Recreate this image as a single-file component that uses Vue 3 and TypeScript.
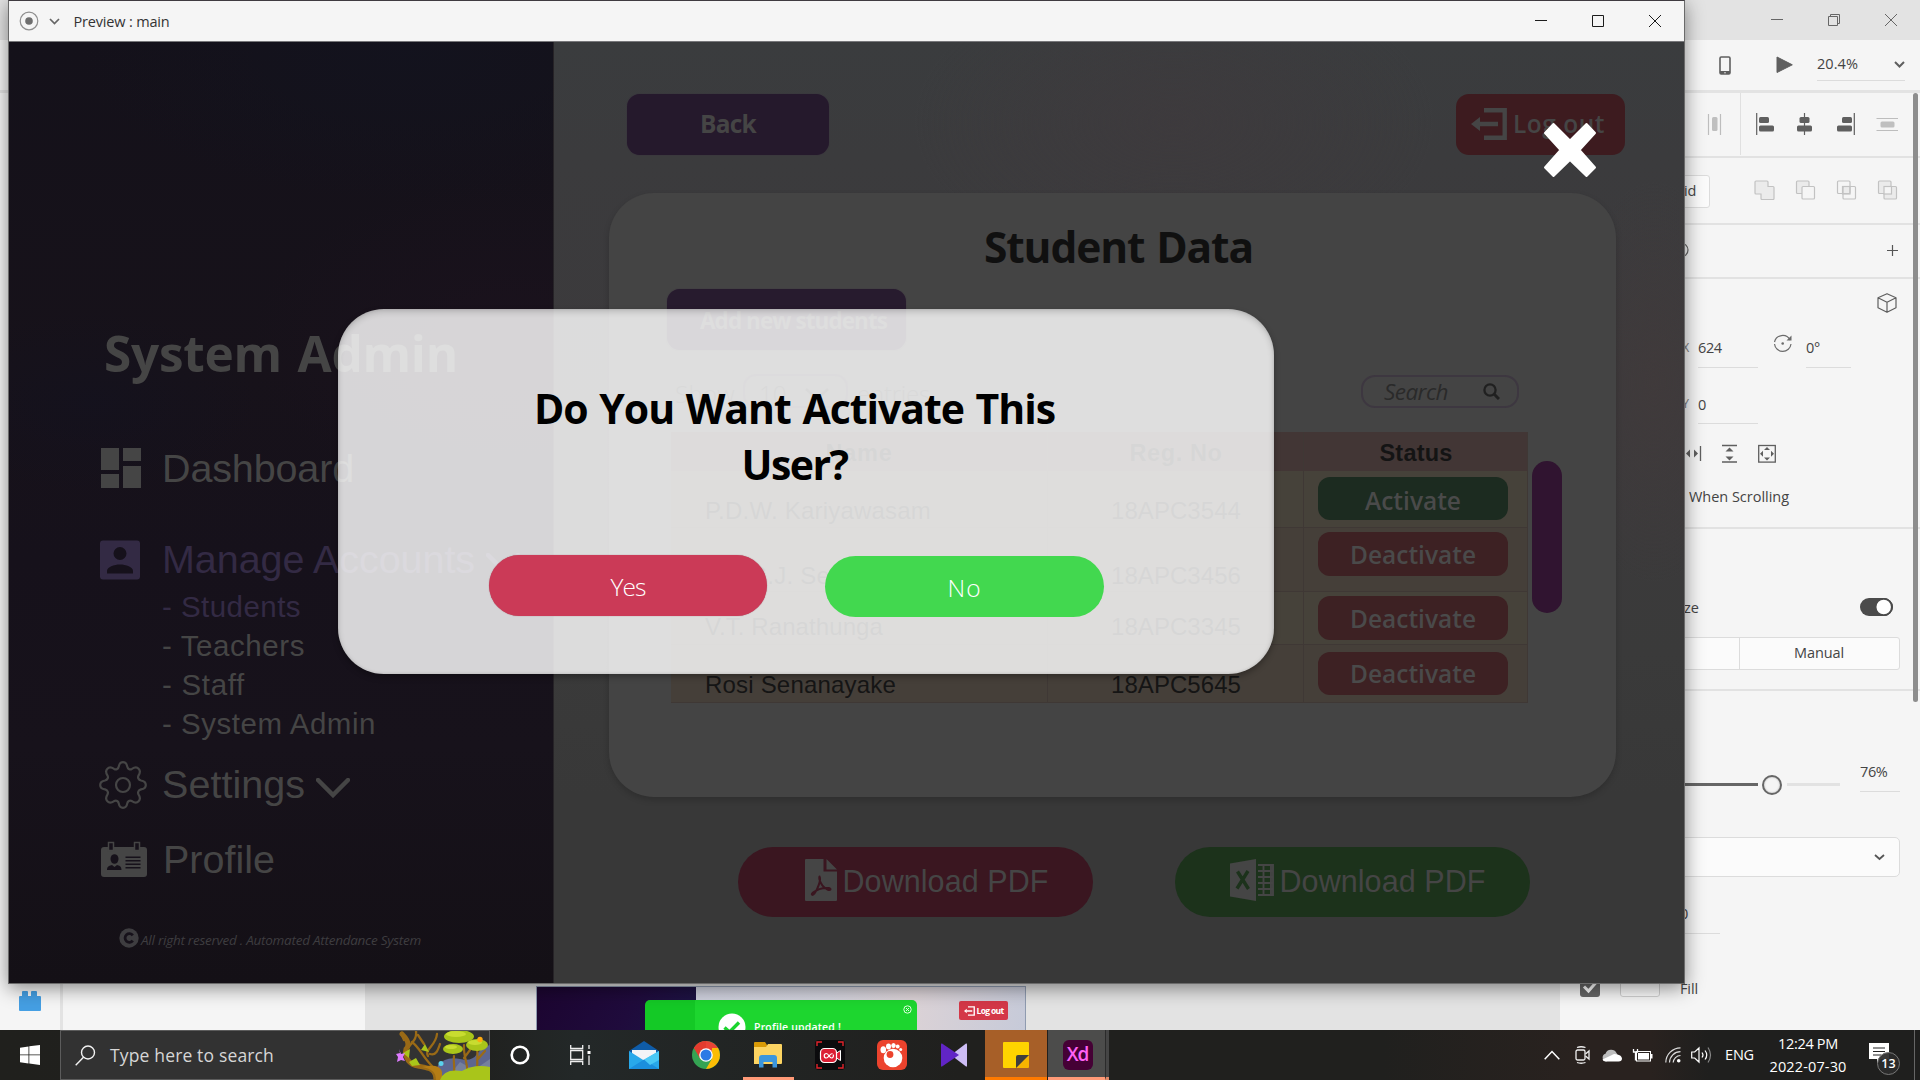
<script setup lang="ts">
import type { Directive } from 'vue'

interface StudentRow {
  name: string
  reg: string
  status: 'Activate' | 'Deactivate'
  height: number
  textTop: number
  buttonTop: number
  nameWidth: number
}

const rows: StudentRow[] = [
  { name: 'P.D.W. Kariyawasam', reg: '18APC3544', status: 'Activate', height: 56.5, textTop: 26, buttonTop: 5.5, nameWidth: 226 },
  { name: 'P.G.S.J. Senarathne', reg: '18APC3456', status: 'Deactivate', height: 64.5, textTop: 34.5, buttonTop: 4.5, nameWidth: 222 },
  { name: 'V.T. Ranathunga', reg: '18APC3345', status: 'Deactivate', height: 52.5, textTop: 21, buttonTop: 4, nameWidth: 178 },
  { name: 'Rosi Senanayake', reg: '18APC5645', status: 'Deactivate', height: 58.5, textTop: 26.5, buttonTop: 7, nameWidth: 191 },
]

const accountLinks = [
  { label: '- Students', width: 139, active: true },
  { label: '- Teachers', width: 143, active: false },
  { label: '- Staff', width: 83, active: false },
  { label: '- System Admin', width: 214, active: false },
]

// Tracks a label out (or in) so that it fills the given width in pixels.
const vFit: Directive<HTMLElement, number> = {
  mounted(el, binding) {
    const count = (el.textContent ?? '').length
    const natural = el.getBoundingClientRect().width
    if (count > 0) el.style.letterSpacing = `${(binding.value - natural) / count}px`
  },
}
</script>

<template>
  <div class="desktop">
    <div class="editor">
      <header class="editor-title">
        <svg width="130" height="16" viewBox="1769 12 130 16" fill="none" stroke="#666" stroke-width="1">
          <path d="M1771 19.5h12M1828.500 16.500h9v9h-9zM1830.500 16.500v-2h9v9h-2M1885 14l12 12M1897 14l-12 12" />
        </svg>
      </header>
      <div class="editor-tools">
        <svg class="phone" width="12" height="19" viewBox="0 0 12 19"><rect x="1" y="1" width="10" height="17" rx="1.200" fill="none" stroke="#5f5f5f" stroke-width="1.600" /><path d="M1 15h10v3H1z" fill="#5f5f5f" /><circle cx="6" cy="16.800" r=".7" fill="#fff" /></svg>
        <svg class="play" width="17" height="18" viewBox="0 0 17 18"><path d="M1 1v15.500L16.300 8.800z" fill="#5f5f5f" stroke="#5f5f5f" stroke-linejoin="round" /></svg>
        <div class="zoom-level"><span v-fit="41" class="t">20.4%</span><svg width="11" height="7" viewBox="0 0 11 7"><path d="M1 1l4.500 4.500L10 1" fill="none" stroke="#5f5f5f" stroke-width="2" /></svg></div>
      </div>
      <div class="editor-body">
        <div class="rail">
          <svg width="22" height="20" viewBox="0 0 22 20"><path d="M1 5h2V1q0-1 1-1h4q1 0 1 1v4h3V1q0-1 1-1h4q1 0 1 1v4h3q1 0 1 1v13q0 1-1 1H1q-1 0-1-1V6q0-1 1-1z" fill="#459fe3" /></svg>
        </div>
        <div class="library"></div>
        <div class="canvas">
          <div class="artboard">
            <div class="art-side"></div>
            <div class="art-main">
              <div class="art-logout">
                <svg width="11" height="10" viewBox="0 0 36 32"><path d="M13 2.500h20.500v27H13M8 16h19" fill="none" stroke="#fff" stroke-width="4.500" /><path d="M0 16l9-7v14z" fill="#fff" /></svg>
                <span v-fit="27" class="t">Log out</span>
              </div>
            </div>
            <div class="toast">
              <svg class="toast-check" width="28" height="28" viewBox="0 0 28 28"><circle cx="14" cy="14" r="13.500" fill="#fff" /><path d="M6.500 14.500l5 4.500L21 9.500" fill="none" stroke="#1bd42e" stroke-width="3.400" /></svg>
              <span v-fit="87" class="t">Profile updated !</span>
              <svg class="toast-close" width="9" height="9" viewBox="0 0 9 9" fill="none" stroke="#dfffdf"><circle cx="4.500" cy="4.500" r="3.700" /><path d="M3 3l3 3M6 3L3 6" /></svg>
            </div>
          </div>
        </div>
        <aside class="props">
          <section class="sec sec-align">
            <svg width="200" height="62" viewBox="1702 93 200 62">
              <g stroke-width="1.200" stroke="#bdbdbd"><path d="M1708.500 114v21M1720.500 114v21" /><path d="M1876.500 118.500h21.500M1876.500 130.500h21.500" /></g>
              <g fill="#bfbfbf"><rect x="1712" y="117" width="5.500" height="14" rx="1.500" /><rect x="1880.500" y="121.500" width="14" height="6" rx="1.500" /></g>
              <path d="M1740.500 93v62" stroke="#e0e0e0" />
              <path d="M1756.700 113v22M1804.500 113v22M1854.300 113v22" stroke="#5f5f5f" stroke-width="1.200" />
              <g fill="#5f5f5f"><rect x="1759" y="117" width="10" height="6" rx="1.500" /><rect x="1759" y="125.500" width="15" height="6" rx="1.500" /><rect x="1799.500" y="117" width="10" height="6" rx="1.500" /><rect x="1797" y="125.500" width="15" height="6" rx="1.500" /><rect x="1842" y="117" width="10" height="6" rx="1.500" /><rect x="1837" y="125.500" width="15" height="6" rx="1.500" /></g>
            </svg>
          </section>
          <section class="sec sec-bool">
            <div class="grid-button"><span v-fit="12" class="t">id</span></div>
            <svg width="144" height="20" viewBox="1754 179.500 144 20" fill="none" stroke="#c2c2c2" stroke-width="1.200">
              <path d="M1756 180.500h11q1 0 1 1v4.500h5q1 0 1 1v11q0 1-1 1h-11q-1 0-1-1V193.500h-5q-1 0-1-1v-11q0-1 1-1z" fill="#ebebeb" />
              <rect x="1796.500" y="180.500" width="12.500" height="12.500" rx="1" fill="#ebebeb" /><rect x="1802" y="186" width="12.500" height="12.500" rx="1" fill="#f5f5f5" />
              <rect x="1842.500" y="186" width="7.500" height="7.500" fill="#ebebeb" /><rect x="1837.500" y="180.500" width="12.500" height="12.500" rx="1" /><rect x="1843" y="186" width="12.500" height="12.500" rx="1" />
              <rect x="1884" y="186" width="12.500" height="12.500" rx="1" fill="#ebebeb" /><rect x="1878.500" y="180.500" width="12.500" height="12.500" rx="1" fill="#ebebeb" /><rect x="1884" y="186" width="7.500" height="7.500" fill="#f5f5f5" />
            </svg>
          </section>
          <section class="sec sec-component">
            <svg width="12" height="16" viewBox="0 0 12 16"><circle cx="4" cy="8" r="7" fill="none" stroke="#666" stroke-width="1.200" /></svg>
            <svg width="11" height="11" viewBox="0 0 11 11"><path d="M5.500 0v11M0 5.500h11" stroke="#555" stroke-width="1.200" /></svg>
          </section>
          <section class="sec sec-transform">
            <div class="cube-row"><svg width="20" height="20" viewBox="0 0 20 20" fill="none" stroke="#5f5f5f" stroke-width="1.200" stroke-linejoin="round"><path d="M10 .7l9 4v10l-9 4.600-9-4.600v-10zM1 4.700l9 4.500 9-4.500M10 9.200v10" /></svg></div>
            <div class="field-row">
              <span class="axis">X</span><span class="field f60">624</span>
              <svg class="rotate" width="20" height="20" viewBox="0 0 20 20" fill="none" stroke="#6b6b6b" stroke-width="1.200"><path d="M1.500 8A8.300 8.300 0 0 1 17 6M18 10A8.300 8.300 0 0 1 1.500 10" /><path d="M18.500 1.500v5h-5z" fill="#6b6b6b" stroke="none" /><circle cx="9.700" cy="9.500" r="1.300" fill="#6b6b6b" stroke="none" /></svg>
              <span class="field f45">0°</span>
            </div>
            <div class="field-row second"><span class="axis">Y</span><span class="field f60">0</span></div>
            <svg class="constraints" width="98" height="20" viewBox="1680 444 98 20" fill="none" stroke="#5f5f5f" stroke-width="1.300">
              <path d="M1684.500 446v15M1701.500 446v15M1723 445.500h15M1723 462h15" /><rect x="1759.700" y="445.500" width="16.600" height="16.600" />
              <path fill="#5f5f5f" stroke="none" d="M1687 453.500l4-4v8zM1699 453.500l-4-4v8zM1730.500 447.500l4 4h-8zM1730.500 460.500l4-4h-8zM1768 447l3 3h-6zM1768 460.500l3-3h-6zM1761 453.700l3-3v6zM1775 453.700l-3-3v6z" />
            </svg>
            <div class="when"><span v-fit="100" class="t">When Scrolling</span></div>
          </section>
          <section class="sec sec-resize">
            <div class="resize-row"><span class="t">ze</span><svg width="33" height="18" viewBox="0 0 33 18"><rect width="33" height="18" rx="9" fill="#4b4b4b" /><circle cx="23.700" cy="9" r="8" fill="#fff" stroke="#4b4b4b" stroke-width="1.500" /><circle cx="23.700" cy="9" r="8.700" fill="none" stroke="#4b4b4b" stroke-width="1" /></svg></div>
            <div class="segmented"><span></span><span><b v-fit="50" class="t">Manual</b></span></div>
          </section>
          <section class="sec-look">
            <div class="slider-row"><i class="track-on"></i><i class="knob"></i><i class="track-off"></i><span class="field f40">76%</span></div>
            <div class="blend"><svg width="11" height="7" viewBox="0 0 11 7"><path d="M1 1l4.500 4L10 1" fill="none" stroke="#555" stroke-width="1.800" /></svg></div>
            <div class="radius-field"><span class="t">0</span></div>
            <div class="fill-row"><svg width="20" height="20" viewBox="0 0 20 20"><rect width="20" height="20" rx="3" fill="#666" /><path d="M4 9.500l4.500 4.500L16 5.500" fill="none" stroke="#fff" stroke-width="3" /></svg><i class="swatch"></i><span v-fit="18" class="t">Fill</span></div>
          </section>
          <i class="panel-scroll"></i>
        </aside>
      </div>
    </div>

    <div class="preview">
      <header class="preview-title">
        <svg width="20" height="20" viewBox="0 0 20 20"><circle cx="10" cy="10" r="8.800" fill="none" stroke="#8f8f8f" stroke-width="1.200" /><circle cx="10" cy="10" r="3.800" fill="#6e6e6e" /></svg>
        <svg class="pv-chev" width="11" height="7" viewBox="0 0 11 7"><path d="M1 1l4.500 4.500L10 1" fill="none" stroke="#666" stroke-width="1.700" /></svg>
        <span v-fit="96" class="t">Preview : main</span>
        <svg class="pv-controls" width="128" height="14" viewBox="1534 14 128 14" fill="none" stroke="#1c1c1c"><path d="M1535 20.500h12M1592.500 15.500h11v11h-11zM1649 15l12 12M1661 15l-12 12" /></svg>
      </header>
      <div class="stage">
        <nav class="sidebar">
          <h1><span v-fit="354">System Admin</span></h1>
          <div class="nav-item dash">
            <i class="slot"><svg class="ic-dash" width="40" height="40" viewBox="0 0 40 40"><path d="M0 0h18v22H0zM22 0h18v13H22zM0 26h18v14H0zM22 18h18v22H22z" fill="#454545" /></svg></i>
            <span v-fit="192">Dashboard</span>
          </div>
          <div class="nav-item accounts">
            <i class="slot"><svg width="40" height="40" viewBox="0 0 40 40"><path fill-rule="evenodd" fill="#332a44" d="M3 .5h34q3 0 3 3v33q0 3-3 3H3q-3 0-3-3v-33q0-3 3-3zM20 7a6.500 6.500 0 1 0 0 13a6.500 6.500 0 0 0 0-13zM7 33.500h26v-2.500c0-4-7-6.500-13-6.500s-13 2.500-13 6.500z" /></svg></i>
            <span v-fit="313">Manage Accounts</span>
            <svg class="nav-chev" width="34" height="20" viewBox="0 0 34 20"><path d="M2 2l15 15L32 2" fill="none" stroke="#332a44" stroke-width="4.500" stroke-linecap="round" /></svg>
          </div>
          <ul>
            <li v-for="link in accountLinks" :key="link.label" :class="{ active: link.active }"><span v-fit="link.width">{{ link.label }}</span></li>
          </ul>
          <div class="nav-item settings">
            <i class="slot"><svg class="ic-gear" width="48" height="48" viewBox="0 0 48 48" fill="none" stroke="#454545" stroke-width="2.200" stroke-linejoin="round"><path d="M24 1.200c3 0 3.800 2 4.200 4.200.4 2.400 2.400 3.600 4.700 2.500 2-1.300 4.400-2.600 6.700-.2 2.300 2.300 1.400 4.400 0 6.600-1.200 2.200-.2 4.600 2.400 5.200 2.600.4 4.800 1.300 4.800 4.500s-2.200 4-4.800 4.400c-2.600.6-3.600 3-2.400 5.200 1.400 2.200 2.300 4.300 0 6.700-2.300 2.300-4.600 1.200-6.700-.2-2.300-1.200-4.300 0-4.700 2.500-.4 2.200-1.200 4.200-4.200 4.200s-3.800-2-4.200-4.200c-.4-2.500-2.400-3.700-4.700-2.500-2.100 1.400-4.400 2.500-6.700.2-2.300-2.400-1.400-4.500 0-6.700 1.200-2.200.2-4.600-2.400-5.200-2.600-.4-4.800-1.200-4.800-4.400s2.200-4.100 4.800-4.500c2.600-.6 3.600-3 2.400-5.200-1.400-2.200-2.300-4.300 0-6.600 2.300-2.400 4.700-1.100 6.700.2 2.300 1.100 4.300-.1 4.700-2.500.4-2.200 1.200-4.200 4.200-4.200z" /><circle cx="24" cy="24" r="7" /></svg></i>
            <span v-fit="143">Settings</span>
            <svg class="nav-chev" width="34" height="20" viewBox="0 0 34 20"><path d="M2 2l15 15L32 2" fill="none" stroke="#454545" stroke-width="4.500" stroke-linecap="round" /></svg>
          </div>
          <div class="nav-item profile">
            <i class="slot"><svg class="ic-id" width="46" height="36" viewBox="0 0 46 36"><path fill="#454545" d="M3 6h40q3 0 3 3v24q0 3-3 3H3q-3 0-3-3V9q0-3 3-3z" /><path d="M7.500 1.500h5v8h-5zM33.500 1.500h5v8h-5z" fill="#16111a" stroke="#454545" stroke-width="1.500" /><g fill="#16111a"><ellipse cx="13.500" cy="18" rx="4" ry="4.800" /><path d="M6 29c0-4 3-4.500 5-5l2.500 2 2.500-2c2 .5 4.500 1 4.500 5zM24.500 15.500h15v1.500h-15zM24.500 19h15v1.500h-15zM24.500 22.500h15V24h-15zM24.500 26h15v1.500h-15z" /></g></svg></i>
            <span v-fit="112">Profile</span>
          </div>
          <footer>
            <svg width="20" height="20" viewBox="0 0 20 20"><circle cx="10" cy="10" r="9.700" fill="#3e3d40" /><path d="M13.800 7.400A4.300 4.300 0 1 0 13.800 12.600" fill="none" stroke="#16111a" stroke-width="2.800" /></svg>
            <span v-fit="280">All right reserved . Automated Attendance System</span>
          </footer>
        </nav>

        <main class="main">
          <div class="top-row">
            <div class="btn back"><span v-fit="56">Back</span></div>
            <div class="btn logout">
              <svg width="36" height="32" viewBox="0 0 36 32"><path d="M13 2.300h20.700v27.400H13M8 16h19" fill="none" stroke="#454545" stroke-width="4.400" /><path d="M0 16l9-7v14z" fill="#454545" /></svg>
              <span v-fit="92">Log out</span>
            </div>
          </div>
          <div class="card">
            <h2><span v-fit="269">Student Data</span></h2>
            <div class="btn add"><span v-fit="187">Add new students</span></div>
            <div class="toolbar">
              <span v-fit="60" class="show">Show</span>
              <div class="count"><span>10</span><svg width="26" height="14" viewBox="0 0 26 14"><path d="M2 2l11 10L24 2" fill="none" stroke="#2a2a2a" stroke-width="2.500" /></svg></div>
              <span v-fit="73" class="entries">entries</span>
              <div class="search"><span v-fit="64">Search</span><svg width="17" height="17" viewBox="0 0 17 17" fill="none" stroke="#202020"><circle cx="7" cy="7" r="5.600" stroke-width="2.300" /><path d="M11 11l5 5" stroke-width="3" /></svg></div>
            </div>
            <div class="table-row">
              <div class="table">
                <div class="tr head"><div class="th"><span v-fit="67">Name</span></div><div class="th"><span v-fit="93">Reg. No</span></div><div class="th"><span v-fit="73">Status</span></div></div>
                <div v-for="row in rows" :key="row.reg" class="tr" :style="{ height: row.height + 'px' }">
                  <div class="td name" :style="{ paddingTop: row.textTop + 'px' }"><span v-fit="row.nameWidth">{{ row.name }}</span></div>
                  <div class="td reg" :style="{ paddingTop: row.textTop + 'px' }"><span v-fit="130">{{ row.reg }}</span></div>
                  <div class="td" :style="{ paddingTop: row.buttonTop + 'px' }">
                    <div class="pill" :class="row.status.toLowerCase()"><span v-fit="row.status === 'Activate' ? 96 : 126">{{ row.status }}</span></div>
                  </div>
                </div>
              </div>
              <i class="table-scroll"></i>
            </div>
          </div>
          <div class="downloads">
            <div class="download pdf">
              <svg width="32" height="42" viewBox="0 0 32 42"><path fill="#454545" d="M1 0h17.500v12.500H32V41q0 1-1 1H1q-1 0-1-1V1q0-1 1-1zM21.500 0L32 10.500H21.500z" /><path d="M14.500 17.500c2 3-2 13-5 17-2 2.500-4 1-1.500-1 4-3 10-5 15.500-4.500 3.500.5 2 3-1 1.500-4-2-7-6-8-10-.3-1.500-.3-3 0-3z" fill="none" stroke="#3a1620" stroke-width="2" /></svg>
              <span v-fit="206">Download PDF</span>
            </div>
            <div class="download xls">
              <svg width="44" height="42" viewBox="0 0 44 42"><path fill="#454545" d="M0 4.500L26 0v42L0 37.500z" /><path d="M7.500 12.500l11 17.500M18 12L7 29.500" stroke="#1c321b" stroke-width="3.400" /><path d="M28 6h15v30H28M28 12h15M28 18h15M28 24h15M28 30h15M33.500 6v30M41 6v30" fill="none" stroke="#454545" stroke-width="1.900" /></svg>
              <span v-fit="206">Download PDF</span>
            </div>
          </div>
        </main>

        <svg class="close-x" width="54" height="56" viewBox="0 0 54 56"><path d="M10.500 2L27 18.500 43.500 2 52 11 36.500 28 52 45.500 43.500 54 27 38 10.500 54 2 45.500 17.500 28 2 11z" fill="#fff" stroke="#fff" stroke-width="2" stroke-linejoin="round" /></svg>

        <div class="modal">
          <p><span v-fit="521">Do You Want Activate This</span></p>
          <p><span v-fit="106">User?</span></p>
          <div class="choices">
            <button class="yes"><span v-fit="35">Yes</span></button>
            <button class="no"><span v-fit="34">No</span></button>
          </div>
        </div>
      </div>
    </div>

    <div class="taskbar">
      <div class="start"><svg width="20" height="20" viewBox="0 0 20 20"><path d="M0 2.800L8.500 1.500V9.500H0zM9.300 1.300L20 0v9.500H9.300zM0 10.300h8.500v8.200L0 17.300zM9.300 10.300H20V20L9.300 18.600z" fill="#fff" /></svg></div>
      <div class="searchbox">
        <svg class="mag" width="21" height="21" viewBox="0 0 21 21" fill="none" stroke="#f2f2f2" stroke-width="1.400"><circle cx="13" cy="7.500" r="6.500" /><path d="M8.500 12.300L.7 20.300" /></svg>
        <span v-fit="164" class="t">Type here to search</span>
        <svg class="trees" width="95" height="49" viewBox="395 1031 95 49">
          <path d="M438 1065q8-9 22-6 12 3 17-5 6-8 13-9v35h-55z" fill="#5d6690" />
          <path d="M452 1072l8-10 14 8 16-11v21h-50z" fill="#75809d" />
          <g fill="none" stroke="#9a6a16" stroke-linecap="round"><path d="M436 1080c0-12-8-12-18-14-8-1-14-8-12-17 4-4 2-9-4-15" stroke-width="5" /><path d="M408 1048c4-6 9-8 8-17M404 1040l-3-7M432 1066c-10-10-12-18-20-24M428 1056c-4-7 8-10 9-22M424 1044l-6-9M430 1054c6 2 8-4 10-10" stroke-width="2.300" /><path d="M467 1075c2-10-4-18-3-30M477 1075c0-12 1-18 0-30M454 1072c1-6-1-10 0-16M464 1058l6-8M477 1060l8-9" stroke-width="2.200" /></g>
          <path d="M436 1080c0-8-4-11-14-13 10-2 18-2 20 5v8z" fill="#b57d15" />
          <g fill="#a9c51a"><ellipse cx="459" cy="1036.500" rx="15" ry="6.500" /><ellipse cx="477" cy="1045" rx="11" ry="6" /><ellipse cx="453" cy="1049" rx="10" ry="5" /><path d="M440 1080q4-12 22-9 12-7 28-4v13z" /><path d="M403 1053l7-4-1 9zM409 1062l7-4 4 7-8 1zM421 1050l4-6 4 8z" /></g>
          <g fill="#c8dc30"><ellipse cx="456" cy="1034" rx="10" ry="3" /><ellipse cx="475" cy="1042.500" rx="7" ry="2.500" /><ellipse cx="451" cy="1047" rx="6" ry="2" /></g>
          <circle cx="480" cy="1039.500" r="2.700" fill="#ffab0e" /><circle cx="441" cy="1063.500" r="2.500" fill="#5ad2ec" /><path d="M399 1049l2 5 4-1-2 4 2 4-4-1-4 2 1-5-2-3 4-1z" fill="#df7bff" />
        </svg>
      </div>
      <div class="task first"><svg width="20" height="20" viewBox="0 0 20 20"><circle cx="10" cy="10" r="8.300" fill="none" stroke="#fff" stroke-width="2.600" /></svg></div>
      <div class="task view"><svg width="21" height="20" viewBox="0 0 21 20" fill="none" stroke="#eee" stroke-width="1.300"><path d="M.7 0v3.500h12V0M.7 20v-3.500h12V20M.7 5.500h12v9H.7zM19 0v4M19 10.500V20" /><path d="M17.500 6h3v3h-3z" fill="#fff" stroke="none" /></svg></div>
      <div class="task"><svg width="30" height="28" viewBox="0 0 30 28"><path d="M0 10L15 0l15 10v3H0z" fill="#0f5ca8" /><path d="M3 9h24v10H3z" fill="#f2f4f7" /><path d="M0 10l15 9.500L0 28zM30 10v18H0z" fill="#28a8ea" /><path d="M0 28l15-9.500L30 28z" fill="#1b8fdd" /><path d="M15 18.500L30 10v9l-9 5z" fill="#49c8f5" /></svg></div>
      <div class="task"><svg width="28" height="28" viewBox="0 0 28 28"><circle cx="14" cy="14" r="14" fill="#34a353" /><path d="M14 14L1.900 7A14 14 0 0 1 26.100 7z" fill="#ea4335" /><path d="M1.900 7A14 14 0 0 1 14 0v7.500L8 17.500z" fill="#e33b2e" /><path d="M26.100 7A14 14 0 0 1 14 28l6-10.500L20 7z" fill="#fbbc05" /><circle cx="14" cy="14" r="6.800" fill="#fff" /><circle cx="14" cy="14" r="5.500" fill="#2c7be5" /></svg></div>
      <div class="task running"><svg width="28" height="26" viewBox="0 0 28 26"><path d="M0 1q0-1 1-1h10l2 3v4H0z" fill="#d99a06" /><path d="M0 5h12l2-3h13q1 0 1 1v18q0 1-1 1H0z" fill="#fcd462" /><path d="M5 25.500V16q0-3 3-3h12q3 0 3 3v9.500h-4.500V20h-9v5.500z" fill="#3b96dd" /></svg></div>
      <div class="task"><svg width="30" height="30" viewBox="0 0 30 30"><rect width="30" height="30" rx="4" fill="#0b0b0d" /><path d="M2 6V2h5M23 2h5v4M28 24v4h-5M7 28H2v-4" fill="none" stroke="#e3242b" stroke-width="1.400" /><path d="M20 14l5.500-3.500v10L20 17z" fill="#dc1f35" stroke="#fff" stroke-width="1" /><rect x="5.500" y="8.500" width="16" height="14" rx="4" fill="#dc1f35" stroke="#fff" stroke-width="1.200" /><path d="M17.500 13.500c-3 0-4 4.500-6 4.500a2.200 2.200 0 0 1 0-4.500c2 0 3 4.500 5 4.500a2.200 2.200 0 0 0 1.500-3.500" fill="none" stroke="#fff" stroke-width="1.200" /></svg></div>
      <div class="task"><svg width="30" height="30" viewBox="0 0 30 30"><rect width="30" height="30" rx="6" fill="#ec432d" /><g fill="#fff"><circle cx="16" cy="18" r="9.300" /><ellipse cx="6.300" cy="9.700" rx="2.800" ry="3.500" /><ellipse cx="11.500" cy="6.500" rx="2.500" ry="3" /><ellipse cx="16.500" cy="5.500" rx="2.200" ry="2.600" /><circle cx="20.700" cy="6.500" r="1.900" /><circle cx="23.700" cy="9.500" r="1.500" /></g><circle cx="13" cy="14.500" r="3.400" fill="#ec432d" /></svg></div>
      <div class="task"><svg width="26" height="24" viewBox="0 0 26 24"><path d="M25 .5q1-.5 1 1v21q0 1.500-1 1L10 12z" fill="#cdbdf5" /><path d="M1 .5q-1-.5-1 1v21q0 1.500 1 1L18 12z" fill="#6125c6" /></svg></div>
      <div class="task sticky"><svg width="26" height="26" viewBox="0 0 26 26"><path d="M1 0h24q1 0 1 1v12L13 26H1q-1 0-1-1V1q0-1 1-1z" fill="#ffd400" /><path d="M26 13v12q0 1-1 1H13z" fill="#f7b500" /><path d="M13 15q0-2 2-2h11L13 26z" fill="#3f3f3d" /></svg></div>
      <div class="task xd"><span class="xd-logo">Xd</span></div>
      <i class="xd-stack"></i>
      <div class="tray">
        <svg class="tr-chev" width="16" height="10" viewBox="0 0 16 10"><path d="M.7 9.200L8 1.500l7.300 7.700" fill="none" stroke="#fff" stroke-width="1.500" /></svg>
        <svg class="tr-cam" width="15" height="18" viewBox="0 0 15 18" fill="none" stroke="#eee" stroke-width="1.300"><rect x="1" y="4" width="9" height="10" rx="1.500" /><path d="M10.500 8l3.500-3v8l-3.500-3M2 1.500Q6 0 10.500 1.500M2 16.500Q6 18 10.500 16.500" /></svg>
        <svg class="tr-cloud" width="20" height="13" viewBox="0 0 20 13"><path d="M4 12.500a4 4 0 0 1-.5-7.800A6 6 0 0 1 14.500 4L17 8z" fill="#bdbdbd" /><path d="M4 12.500q-3 0-3.500-2L10 6q2-1.500 5-.5 4.500.5 5 4 0 3-3.500 3z" fill="#fff" /></svg>
        <svg class="tr-bat" width="21" height="15" viewBox="0 0 21 15"><path d="M1.500 1v3h4V1M3.500 4v8.500" fill="none" stroke="#fff" stroke-width="1.300" /><rect x="4.500" y="3.500" width="14" height="9.500" fill="none" stroke="#fff" /><path d="M6 5h11v6.500H6zM19 6h1.500v4.500H19z" fill="#fff" /></svg>
        <svg class="tr-wifi" width="16" height="16" viewBox="0 0 16 16" fill="none" stroke="#ddd" stroke-width="1.200"><path d="M.8 15.500A15 15 0 0 1 15.500.8M4.500 15.500A11 11 0 0 1 15.500 4.700M8.200 15.500A7.500 7.500 0 0 1 15.500 8.500" /><circle cx="13.700" cy="13.700" r="1.800" fill="#fff" stroke="none" /></svg>
        <svg class="tr-vol" width="21" height="18" viewBox="0 0 21 18" fill="none" stroke="#fff" stroke-width="1.200"><path d="M.7 6h3L8 2v14l-4.300-4h-3zM11 6.500q2 2.500 0 5M14 4.500q3.500 4.500 0 9" /><path d="M17 1.500q5 7.500 0 15" stroke="#888" /></svg>
        <span v-fit="29" class="t lang">ENG</span>
        <div class="clock"><span v-fit="60" class="t">12:24 PM</span><span v-fit="77" class="t">2022-07-30</span></div>
        <div class="notes"><svg width="20" height="21" viewBox="0 0 20 21"><path d="M0 0h20v16h-8l-4 4.500V16H0z" fill="#fff" /><path d="M4 5h12M4 8.500h12M4 12h8" stroke="#222" stroke-width="1.200" /></svg><b>13</b></div>
      </div>
    </div>
  </div>
</template>

<style>
body { margin: 0; overflow: hidden; }
</style>

<style scoped>
* { box-sizing: border-box; }
.desktop { width: 1920px; height: 1080px; position: relative; overflow: hidden; font-family: "Open Sans", "Noto Sans", sans-serif; color: #444; background: #f5f5f5; }
svg { display: block; flex: none; }
span, b.t { white-space: nowrap; display: inline-block; }
i { display: block; flex: none; }
.t { font-size: 14.500px; line-height: 20px; font-weight: 400; }

.editor { height: 1030px; display: flex; flex-direction: column; }
.editor-title { height: 40px; background: #e3e3e3; display: flex; justify-content: flex-end; padding: 12px 21px 0 0; flex: none; }
.editor-tools { height: 53px; flex: none; border-bottom: 3px solid #e3e3e3; display: flex; justify-content: flex-end; align-items: center; padding-right: 15px; }
.play { margin-left: 45px; }
.phone { margin-top: 1px; }
.zoom-level { width: 88px; height: 26px; margin: 5px 0 0 24px; border-bottom: 1px solid #dcdcdc; display: flex; justify-content: space-between; align-items: center; }
.zoom-level .t { margin-top: -7px; }
.zoom-level svg { margin-top: -5px; }
.editor-body { flex: 1; display: flex; min-height: 0; }
.rail { width: 63px; border-right: 3px solid #e3e3e3; padding: 898px 0 0 19px; }
.library { width: 302px; }
.canvas { width: 1195px; background: #e3e3e3; padding: 893px 0 0 171px; overflow: hidden; }
.artboard { width: 490px; height: 60px; position: relative; display: flex; border: 1px solid #8f9bb0; }
.art-side { width: 159px; background: linear-gradient(120deg, #1c0530 0%, #1f0b3c 55%, #1c1646 100%); }
.art-main { flex: 1; background: linear-gradient(100deg, #cfd1de 0%, #d3d3dd 40%, #dbd2d6 65%, #c6cad9 100%); display: flex; justify-content: flex-end; padding: 14px 17px 0 0; }
.art-logout { width: 49px; height: 19px; border-radius: 2px; background: #d43848; display: flex; align-items: center; justify-content: center; gap: 2px; }
.art-logout .t { font-size: 8.500px; font-weight: 700; color: #fff; line-height: 12px; }
.toast { position: absolute; left: 108px; top: 13px; width: 272px; height: 60px; border-radius: 5px 5px 0 0; background: linear-gradient(90deg, #14c926 0 50px, #1dd62f 50px); display: flex; }
.toast-check { margin: 13px 0 0 73px; }
.toast .t { margin: 17px 0 0 8px; font-size: 10.500px; font-weight: 600; color: #fff; }
.toast-close { margin: 5px 0 0 62px; }

.props { width: 360px; position: relative; }
.sec { border-bottom: 2px solid #e2e2e2; }
.sec-align { height: 65px; padding-left: 142px; }
.sec-bool { height: 67px; display: flex; align-items: center; }
.sec-bool svg { margin-top: -2px; }
.grid-button { width: 150px; height: 33px; border: 1px solid #dcdcdc; border-radius: 3px; background: #fbfbfb; display: flex; justify-content: flex-end; align-items: center; padding-right: 13px; margin: 1px 44px 0 0; }
.sec-component { height: 54px; display: flex; justify-content: space-between; align-items: center; padding: 0 22px 2px 117px; }
.sec-transform { height: 250px; padding-top: 14px; }
.cube-row { display: flex; justify-content: flex-end; padding-right: 23px; }
.field-row { display: flex; height: 34px; margin-top: 21px; padding-left: 122px; }
.field-row.second { margin-top: 22px; }
.field-row.second .field { line-height: 29px; }
.axis { width: 16px; font-size: 12.500px; line-height: 28px; color: #808080; }
.field { font-size: 14.500px; line-height: 27px; border-bottom: 1px solid #dcdcdc; letter-spacing: -0.400px; }
.f60 { width: 60px; }
.f45 { width: 45px; }
.f40 { width: 40px; }
.rotate { margin: 0 13px 0 15px; }
.constraints { margin: 20px 0 0 119px; }
.when { margin: 22px 0 0 129px; line-height: 20px; }
.sec-resize { height: 162px; padding-top: 68px; }
.resize-row { display: flex; justify-content: space-between; align-items: center; padding: 0 27px 0 124px; height: 20px; }
.resize-row .t { margin-top: 2px; }
.segmented { margin: 20px 20px 0 0; height: 33px; display: flex; border: 1px solid #dcdcdc; border-radius: 3px; background: #fbfbfb; }
.segmented > span:first-child { width: 179px; border-right: 1px solid #dcdcdc; }
.segmented > span:last-child { flex: 1; display: flex; justify-content: center; align-items: center; padding: 0 1px 2px 0; }
.slider-row { display: flex; align-items: center; height: 42px; margin-top: 66px; padding-left: 100px; }
.track-on { width: 98px; height: 3px; background: #666; margin-top: 13px; }
.knob { width: 20px; height: 20px; border: 2px solid #666; border-radius: 50%; margin: 14px 5px 0 4px; box-shadow: inset 0 0 2px #aaa; }
.track-off { width: 53px; height: 3px; background: #e2e2e2; margin: 13px 20px 0 0; }
.slider-row .f40 { height: 34px; align-self: flex-end; margin-bottom: 7px; line-height: 28px; }
.blend { height: 40px; margin: 38px 20px 0 0; border: 1px solid #dcdcdc; border-radius: 5px; background: #fbfbfb; display: flex; align-items: center; justify-content: flex-end; padding-right: 14px; }
.radius-field { width: 160px; height: 57px; border-bottom: 1px solid #dcdcdc; padding: 25px 0 0 120px; }
.fill-row { display: flex; padding-left: 20px; margin-top: 41px; align-items: center; }
.swatch { width: 40px; height: 20px; border: 1px solid #d0d0d0; border-radius: 3px; background: #fafafa; margin: 0 20px 0 20px; }
.fill-row .t { margin-top: 4px; }
.panel-scroll { position: absolute; right: 2px; top: 0; width: 5px; height: 609px; border-radius: 3px; background: #8d8d8d; }

.preview { position: absolute; left: 8px; top: 0; width: 1677px; height: 984px; border: 1px solid #6a6a6a; border-top-color: #3f3b40; box-shadow: 0 4px 18px rgba(0, 0, 0, .45); }
.preview-title { height: 41px; background: #f5f5f5; border-bottom: 1px solid #77777a; display: flex; align-items: center; padding-left: 10px; color: #333; }
.preview-title .t { margin-top: 2px; }
.pv-chev { margin: 0 13.500px 0 10px; }
.pv-controls { margin-left: auto; margin-right: 22px; }
.stage { height: 941px; display: flex; position: relative; background: #3a3a3a; overflow: hidden; }
.sidebar { width: 544.500px; height: 941px; padding-left: 1px; flex: none; border-right: 1px solid #262327; background:
  radial-gradient(ellipse 170px 90px at 80px 360px, rgba(18, 18, 32, .5), transparent),
  radial-gradient(ellipse 260px 160px at 500px 300px, rgba(28, 18, 30, .7), transparent),
  radial-gradient(ellipse 330px 150px at 400px 10px, rgba(19, 19, 30, .9), transparent),
  linear-gradient(#14111a, #17121a 35%, #16111b 55%, #17121b 75%, #141016); }
h1, h2, ul, p { margin: 0; padding: 0; }
h1 { margin: 282px 0 0 94px; height: 60px; line-height: 59px; font-size: 49.500px; font-weight: 700; color: #454545; word-spacing: 3px; }
.nav-item { display: flex; align-items: center; height: 50px; padding-left: 89px; font: 39.500px/50px "Liberation Sans", Arial, sans-serif; color: #454545; }
.slot { width: 63px; }
.dash { margin-top: 59px; }
.accounts { margin-top: 41px; color: #332a44; }
.settings { margin-top: 16px; }
.settings .slot svg { margin-top: 2px; }
.profile { margin-top: 25px; }
.profile .slot { width: 64px; }
.ic-dash { margin-left: 2px; }
.accounts .slot svg { margin-top: 1px; margin-left: .5px; }
.ic-id { margin-left: 1.500px; }
.nav-chev { margin: 8px 0 0 11px; }
ul { list-style: none; margin-top: 3px; padding-left: 152px; }
li { height: 39px; font: 29.500px/39px "Liberation Sans", Arial, sans-serif; color: #454545; }
li.active { color: #332a44; }
footer { margin: 42px 0 0 109px; height: 24px; display: flex; align-items: center; font-size: 13.500px; font-style: italic; color: #3e3d40; gap: 2px; }
footer span { margin-top: 4px; }

.main { width: 1131px; height: 941px; padding-top: 52px; background:
  radial-gradient(ellipse 260px 150px at 620px 80px, rgba(62, 58, 61, .8), transparent),
  radial-gradient(ellipse 90px 200px at 1100px 340px, rgba(64, 58, 59, .9), transparent),
  linear-gradient(#3a3c3e, #3b3b3d 12%, #3c3a3c 40%, #3a3a3a 65%, #383838 80%); }
.btn { height: 60.500px; border-radius: 13px; display: flex; align-items: center; justify-content: center; font-size: 24.500px; font-weight: 700; color: #454545; }
.top-row { display: flex; justify-content: space-between; padding: 0 59px 0 73.500px; height: 61px; }
.top-row span { margin-top: -1px; }
.back { width: 202px; background: #25192c; }
.logout { width: 169px; background: #3d1b1f; justify-content: flex-start; padding-left: 15px; gap: 6px; font-weight: 600; }
.logout svg { margin-top: -1px; }
.back, .add { box-shadow: 0 0 1px #35273c; }
.card { width: 1007px; height: 604px; margin: 38px 0 0 55.500px; border-radius: 45px; background: #444; padding-top: 24px; box-shadow: 0 3px 6px rgba(0, 0, 0, .18); }
h2 { height: 60px; line-height: 60px; font-size: 42.500px; font-weight: 700; color: #101010; text-align: center; padding-left: 12px; word-spacing: 2px; }
.add { width: 239px; height: 61px; margin: 12px 0 0 58px; background: #271b2e; padding: 2px 0 0 14px; font-size: 22.500px; }
.toolbar { height: 34px; margin-top: 24px; display: flex; align-items: center; padding-left: 66px; font-size: 24px; font-weight: 300; color: #262626; }
.show, .entries { margin-top: 4px; }
.count { width: 105px; height: 34px; margin: 0 9px 0 8px; border: 2px solid #3c3540; border-radius: 13px; display: flex; justify-content: space-between; align-items: center; padding: 5px 16px 0 14px; }
.search { width: 158px; height: 33px; margin-left: auto; margin-right: 97px; border: 2px solid #3d3740; border-radius: 14px; display: flex; align-items: center; justify-content: space-between; padding: 0 17px 0 21px; font-size: 22.500px; font-style: italic; font-weight: 400; color: #2a2a2a; }
.table-row { display: flex; margin: 24px 0 0 62px; }
.table { width: 857px; font-family: "Liberation Sans", Arial, sans-serif; font-size: 24px; color: #151515; }
.tr { display: flex; border-bottom: 1px solid #3f3835; background: #46423a; }
.tr:nth-child(odd) { background: #453f39; }
.tr.head { height: 39px; background: #423635; border-bottom: 0; font-weight: 700; font-size: 23.500px; color: #141414; }
.th, .td { border-right: 1px solid #3f3835; height: 100%; line-height: 28px; }
.th { text-align: center; line-height: 42px; }
.th:nth-child(1), .td:nth-child(1) { width: 377px; }
.th:nth-child(2), .td:nth-child(2) { width: 256px; padding-left: 1px; }
.th:nth-child(3), .td:nth-child(3) { width: 224px; }
.th:nth-child(3) { padding-left: 1px; }
.name { padding-left: 34px; }
.reg { text-align: center; }
.pill { width: 190px; height: 43.500px; margin-left: 14px; border-radius: 12px; background: #3d2123; display: flex; align-items: center; justify-content: center; font: 600 24.500px/40px "Open Sans", sans-serif; color: #4a4a4a; padding-top: 2px; }
.pill.activate { background: #1c2b20; padding-top: 5px; }
.table-scroll { width: 30px; height: 152px; border-radius: 15px; background: #301430; margin: 29px 0 0 3.500px; }
.downloads { display: flex; margin-top: 50px; padding-left: 184px; gap: 82px; }
.download { width: 355px; height: 70px; border-radius: 35px; display: flex; align-items: center; font: 30.500px/60px "Liberation Sans", Arial, sans-serif; color: #454545; }
.download svg { margin-top: -4px; }
.download span { margin-top: -3px; }
.pdf { background: #3a1620; padding-left: 67px; gap: 6px; }
.xls { background: #1c321b; padding-left: 55px; gap: 6px; }

.close-x { position: absolute; left: 1533.500px; top: 79.500px; }
.modal { position: absolute; left: 329px; top: 267px; width: 936px; height: 365px; border-radius: 46px; background: rgba(252, 252, 252, .84); box-shadow: 0 3px 6px rgba(0, 0, 0, .3), inset 0 3px 6px rgba(0, 0, 0, .16), inset 0 0 3px rgba(0, 0, 0, .12); padding-top: 72px; }
.modal p { height: 56px; line-height: 55px; font-size: 41px; font-weight: 700; color: #000; text-align: center; padding-right: 23px; word-spacing: 2px; }
.choices { display: flex; padding-left: 151px; gap: 58px; margin-top: 61.500px; }
.choices button { width: 278px; height: 61px; border: 0; padding: 4px 0 0; border-radius: 31px; color: #fff; font: 300 24.500px/40px "Open Sans", sans-serif; }
.yes { background: #cb3a57; box-shadow: 0 0 1px #9b5563; }
.choices .no { background: #42d84f; margin-top: 1px; width: 279px; }

.taskbar { height: 50px; display: flex; background: linear-gradient(90deg, #20201d, #20211f 25%, #232828 30%, #20201e 50%, #20201e 72%, #29221f 82%, #29221f 86%, #1f1f1e 89%); color: #fff; }
.start { width: 60px; padding: 15px 0 0 20px; }
.searchbox { width: 430px; border: 1px solid #5c5c5c; background: #323232; display: flex; padding-left: 14px; align-items: center; }
.searchbox .t { font-size: 17.500px; color: #d6d6d6; margin: 0 0 0 14px; }
.trees { margin-left: auto; margin-right: -1px; }
.task { width: 62px; display: flex; align-items: center; justify-content: center; flex: none; position: relative; }
.first { margin-left: -1px; }
.view { padding-right: 3px; }
.running::after, .sticky::after, .xd::after { content: ""; position: absolute; bottom: 0; left: 6px; width: 51px; height: 3px; background: #ff9a77; }
.sticky { background: #a75f28; }
.sticky::after { background: #ff7a00; left: 0; width: 100%; }
.xd { background: #4c4c4b; width: 57px; margin-left: 1px; padding-left: 2px; }
.xd::after { left: 0; width: 100%; }
.xd-logo { width: 30px; height: 30px; border-radius: 6px; background: #450135; color: #ff61f6; font-size: 19px; letter-spacing: -1px; line-height: 28px; font-weight: 600; text-align: center; }
.xd-stack { width: 4px; background: #454545; border-left: 1px solid #2b2b2b; border-bottom: 3px solid #e08868; }
.tray { flex: 1; display: flex; align-items: center; padding-left: 435px; }
.tr-cam { margin-left: 15px; }
.tr-cloud { margin-left: 12px; }
.tr-bat { margin-left: 10px; }
.tr-wifi { margin-left: 12px; }
.tr-vol { margin-left: 10px; }
.lang { margin-left: 13px; }
.clock { width: 78px; margin-left: 15px; display: flex; flex-direction: column; align-items: center; gap: 3px; }
.notes { position: relative; margin: -4px 25px 0 22px; }
.notes b { position: absolute; left: 8px; top: 9px; width: 23px; height: 23px; border-radius: 50%; border: 1px solid #777; background: #2b2b2bee; font-size: 12.500px; font-weight: 600; line-height: 21px; text-align: center; }
.tray::after { content: ""; width: 1px; height: 50px; background: #666; }
</style>
